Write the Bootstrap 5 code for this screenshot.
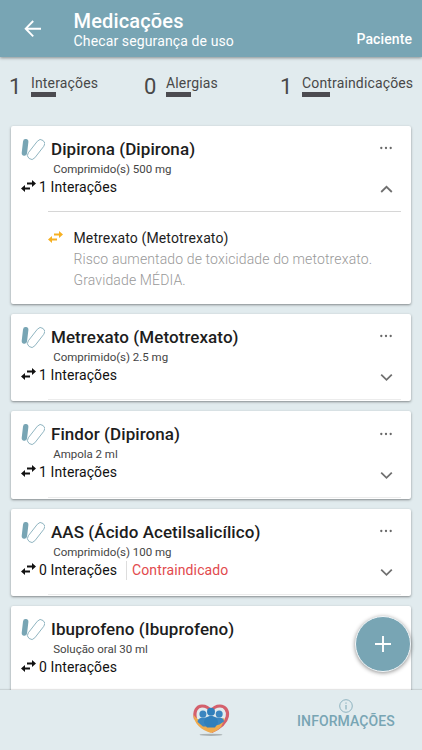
<!DOCTYPE html>
<html lang="pt-BR">
<head>
<meta charset="utf-8">
<meta name="viewport" content="width=device-width, initial-scale=1">
<title>Medicações</title>
<link href="https://cdn.jsdelivr.net/npm/bootstrap@5.3.0/dist/css/bootstrap.min.css" rel="stylesheet">
<style>
body{font-family:Roboto,"Liberation Sans",sans-serif;background:#e1ebee;color:#1d1d1d}
.app{height:750px;width:422px}
.topbar{height:57px;background:#78a5b4;box-shadow:0 1px 3px rgba(0,0,0,.4);padding:0 10px 0 24px;z-index:2}
.topbar h1{font-size:20px;line-height:24px;font-weight:500;letter-spacing:.15px}
.topbar .subline{font-size:14px;line-height:17px;letter-spacing:.12px}
.titles{padding:9px 0 0 31.6px}
.patient{font-size:14px;line-height:18px;font-weight:500;padding-top:30px;letter-spacing:.1px}
.stats{height:68.5px;padding:17px 0 0 9px;color:#484848}
.stat-num{font-size:22px;line-height:26px;width:22px}
.stat-label{font-size:14px;line-height:18px;letter-spacing:.15px}
.stat-bar{width:25px;height:5px;background:#4b4b50}
.stat-bar.wide{width:28px}
.s1{width:135px}.s2{width:136px}
.med{height:87.4px;border:0;border-radius:2px;box-shadow:0 1px 2.5px rgba(0,0,0,.42);margin:0 11px 10px;padding:11px 10px 0}
.med.open{height:178.4px}
.med h2{font-size:17px;line-height:24px;font-weight:500;height:24px;letter-spacing:.07px}
.pill{width:24px;height:24px;margin-right:6px}
.dose{font-size:11.5px;line-height:16px;color:#444;padding:0 0 0 32.2px;margin-bottom:1px;letter-spacing:-.02px}
.inter{font-size:14px;line-height:19px;height:19px;color:#111;letter-spacing:.09px}
.swap{width:15px;height:12px;margin:0 3px 3px 0}
.contra{color:#e2494d;border-left:1px solid #ddd;margin-left:9px;padding-left:5px;letter-spacing:.12px}
.dots{width:14px;height:4px;margin:0 8px 1px 0}
.chev{width:13px;height:9px;margin:5px 8.5px 0 0}
.rule{height:1px;background:#d6d6d6;margin:14.5px 0 0 27px}
.faint{background:#ececec}
.detail{padding:15.5px 0 0 27px;font-size:14px;line-height:21.3px;letter-spacing:.13px}
.detail .swap{margin:3px 10.5px 0 0;color:#f6b022}
.risk{color:#999;font-weight:300}
.bottombar{height:60px;background:#e1ebee;box-shadow:0 -1px 1px rgba(0,0,0,.1);z-index:2;left:0}
.info{color:#78a5b4;font-size:14px;line-height:16px;font-weight:500;width:110px;right:21px;top:8.5px;letter-spacing:.1px}
.heart{width:40px;height:38px;left:191px;top:12px}
.fab{width:56px;height:56px;background:#78a5b4;border:1.5px solid #f4f8fa;box-shadow:0 1px 4px rgba(0,0,0,.45);left:355px;top:616px;z-index:3}
</style>
</head>
<body>
<svg class="d-none" aria-hidden="true">
<symbol id="pill" viewBox="0 0 24 24"><path d="M4.7 4.8 3.4 16" stroke="#78a5b4" stroke-width="5.4" stroke-linecap="round"/><rect x="-4.1" y="-11.4" width="8.2" height="22.800" rx="4.1" transform="translate(15.1 12.5) rotate(38)" fill="#fff" stroke="#8db3bf" stroke-width=".9"/></symbol>
<symbol id="swap" viewBox="0 0 15 12"><path d="M6 2.6h5V0l4 3.500L11 7V4.400H6zM9 7.600H4V5L0 8.500 4 12V9.400h5z" fill="currentColor"/></symbol>
<symbol id="dots" viewBox="0 0 14 4"><g fill="#686868"><circle cx="2.300" cy="2" r="1.150"/><circle cx="7" cy="2" r="1.150"/><circle cx="11.700" cy="2" r="1.150"/></g></symbol>
<symbol id="down" viewBox="0 0 13 9"><path d="m1.200 1.600 5.300 5.200 5.300-5.200" fill="none" stroke="#707070" stroke-width="1.800"/></symbol>
<symbol id="up" viewBox="0 0 13 9"><path d="m1.200 7 5.300-5.200L11.800 7" fill="none" stroke="#707070" stroke-width="1.800"/></symbol>
</svg>
<div class="app d-flex flex-column position-relative overflow-hidden">
<header class="topbar d-flex flex-shrink-0 text-white position-relative">
<svg class="mt-1" width="18" height="50" viewBox="0 0 18 50"><path d="M9.200 17 1.700 24.700l7.500 7.700M1.800 24.700H17" fill="none" stroke="#fff" stroke-width="1.900"/></svg>
<div class="titles flex-grow-1 text-nowrap"><h1 class="m-0">Medicações</h1><div class="subline">Checar segurança de uso</div></div>
<div class="patient">Paciente</div>
</header>
<section class="stats d-flex flex-shrink-0 text-nowrap">
<div class="s1 d-flex"><span class="stat-num">1</span><div><div class="stat-label">Interações</div><div class="stat-bar"></div></div></div>
<div class="s2 d-flex"><span class="stat-num">0</span><div><div class="stat-label">Alergias</div><div class="stat-bar"></div></div></div>
<div class="d-flex"><span class="stat-num">1</span><div><div class="stat-label">Contraindicações</div><div class="stat-bar wide"></div></div></div>
</section>
<main class="text-nowrap">
<article class="card med open">
<div class="d-flex align-items-center"><svg class="pill"><use href="#pill"/></svg><h2 class="m-0 flex-grow-1">Dipirona (Dipirona)</h2><svg class="dots"><use href="#dots"/></svg></div>
<div class="dose">Comprimido(s) 500 mg</div>
<div class="inter d-flex align-items-center"><svg class="swap"><use href="#swap"/></svg><span>1 Interações</span><svg class="chev ms-auto"><use href="#up"/></svg></div>
<div class="rule"></div>
<div class="detail d-flex align-items-start"><svg class="swap"><use href="#swap"/></svg><div><div>Metrexato (Metotrexato)</div><div class="risk">Risco aumentado de toxicidade do metotrexato.<br>Gravidade MÉDIA.</div></div></div>
</article>
<article class="card med">
<div class="d-flex align-items-center"><svg class="pill"><use href="#pill"/></svg><h2 class="m-0 flex-grow-1">Metrexato (Metotrexato)</h2><svg class="dots"><use href="#dots"/></svg></div>
<div class="dose">Comprimido(s) 2.5 mg</div>
<div class="inter d-flex align-items-center"><svg class="swap"><use href="#swap"/></svg><span>1 Interações</span><svg class="chev ms-auto"><use href="#down"/></svg></div>
<div class="rule faint"></div>
</article>
<article class="card med">
<div class="d-flex align-items-center"><svg class="pill"><use href="#pill"/></svg><h2 class="m-0 flex-grow-1">Findor (Dipirona)</h2><svg class="dots"><use href="#dots"/></svg></div>
<div class="dose">Ampola 2 ml</div>
<div class="inter d-flex align-items-center"><svg class="swap"><use href="#swap"/></svg><span>1 Interações</span><svg class="chev ms-auto"><use href="#down"/></svg></div>
<div class="rule faint"></div>
</article>
<article class="card med">
<div class="d-flex align-items-center"><svg class="pill"><use href="#pill"/></svg><h2 class="m-0 flex-grow-1">AAS (Ácido Acetilsalicílico)</h2><svg class="dots"><use href="#dots"/></svg></div>
<div class="dose">Comprimido(s) 100 mg</div>
<div class="inter d-flex align-items-center"><svg class="swap"><use href="#swap"/></svg><span>0 Interações</span><span class="contra">Contraindicado</span><svg class="chev ms-auto"><use href="#down"/></svg></div>
<div class="rule faint"></div>
</article>
<article class="card med">
<div class="d-flex align-items-center"><svg class="pill"><use href="#pill"/></svg><h2 class="m-0 flex-grow-1">Ibuprofeno (Ibuprofeno)</h2></div>
<div class="dose">Solução oral 30 ml</div>
<div class="inter d-flex align-items-center"><svg class="swap"><use href="#swap"/></svg><span>0 Interações</span></div>
</article>
</main>
<button class="fab btn p-0 rounded-circle position-absolute d-flex align-items-center justify-content-center" aria-label="Adicionar"><svg width="16" height="16" viewBox="0 0 16 16"><path d="M8 0v16M0 8h16" stroke="#fff" stroke-width="1.900"/></svg></button>
<footer class="bottombar position-absolute bottom-0 w-100">
<svg class="heart position-absolute" viewBox="0 0 40 38">
<ellipse cx="20" cy="32.800" rx="11.500" ry="1.100" fill="#aab2b4"/>
<path d="M4.500 17C2.500 9 6 4 11 4c4 0 7 2 9 5 2-3 5-5 9-5 5 0 8.500 4.500 7.300 10.500C35 21 27.500 26.500 20.500 29.500" fill="none" stroke="#d4606c" stroke-width="3.200"/>
<path d="M2.400 12.500c1.500 2 3 4 6 5.500 4 4 9 4 14 3l9-4.500c2-.8 3 .5 1.500 2.500L30 25c-3 3-6 5-10 6C11 28.500 2.500 21.500 2.400 12.500z" fill="#efab4e"/>
<g fill="#3b86c0"><circle cx="11.900" cy="12" r="3.500"/><circle cx="28.200" cy="12" r="3.500"/><path d="M6.600 20c0-3 2.500-4.500 5.300-4.500h16c2.900 0 5.100 1.500 5.100 4l-4.500 3-7 2H12z"/></g>
<g fill="#307fbb"><circle cx="20" cy="9.800" r="4"/><path d="M13 21c0-4.500 3-7 7-7s7 2.500 7 7l-3 4.500h-8z"/></g>
</svg>
<div class="info position-absolute text-center"><svg class="d-block mx-auto" width="14" height="14" viewBox="0 0 14 14"><circle cx="7" cy="7" r="6.300" fill="none" stroke="#78a5b4" stroke-width=".8"/><path d="M7 3.500v1.200M7 6v4.500" stroke="#78a5b4" stroke-width="1"/></svg>INFORMAÇÕES</div>
</footer>
</div>
<script src="https://cdn.jsdelivr.net/npm/bootstrap@5.3.0/dist/js/bootstrap.bundle.min.js"></script>
</body>
</html>
